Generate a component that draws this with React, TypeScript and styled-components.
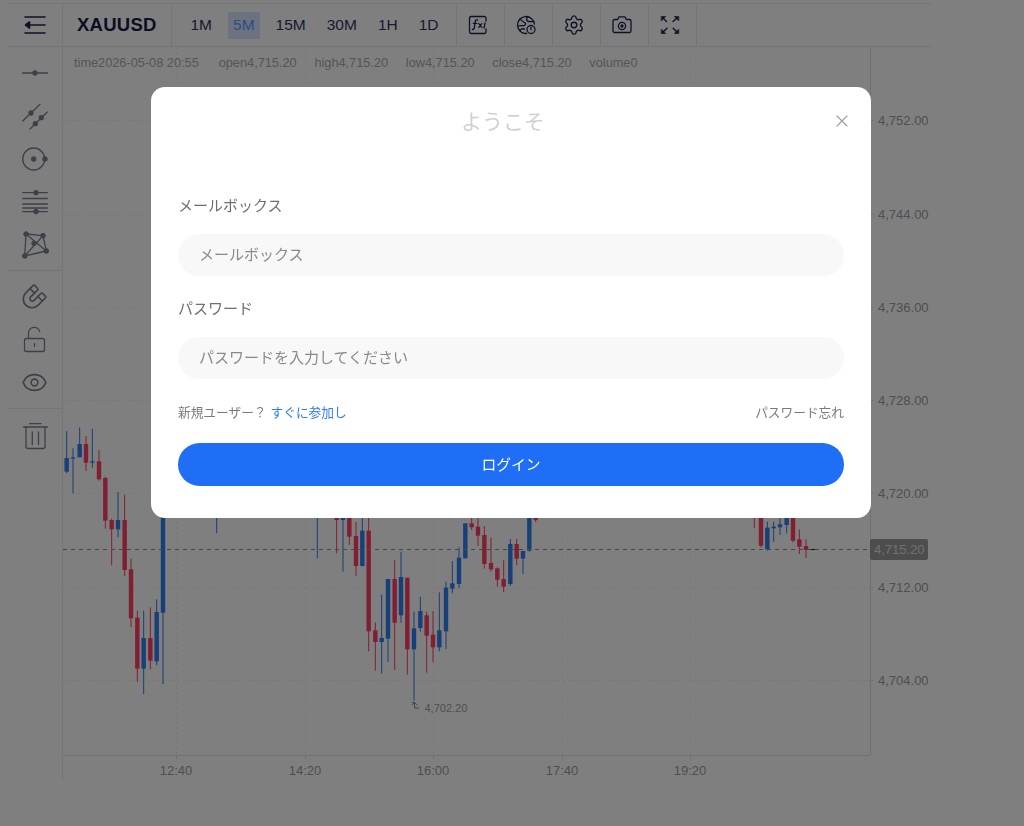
import React from "react";
import styled, { createGlobalStyle } from "styled-components";
import { Magnet, Eye, Settings } from "lucide-react";

const Global = createGlobalStyle`
  html, body { margin: 0; padding: 0; background: #fff; }
  body { font-family: "Liberation Sans", "Noto Sans CJK JP", sans-serif; }
  * { box-sizing: border-box; }
`;

const Page = styled.div`
  width: 1024px;
  height: 826px;
  padding: 3px 0 0 8px;
  overflow: hidden;
`;
const Frame = styled.div`
  width: 924px;
  display: flex;
  flex-direction: column;
`;
const Toolbar = styled.div`
  height: 44px;
  display: flex;
  border-top: 1px solid #ebecee;
  border-bottom: 1px solid #e9eaec;
  color: #1c2450;
`;
const ToolCell = styled.div<{ $w: number; $shift?: number }>`
  width: ${(p) => p.$w}px;
  flex: none;
  display: flex;
  align-items: center;
  justify-content: center;
  padding-right: ${(p) => p.$shift ?? 0}px;
  border-right: 1px solid #e9eaec;
`;
const Symbol = styled.div`
  width: 109px;
  flex: none;
  display: flex;
  align-items: center;
  padding-left: 14px;
  border-right: 1px solid #e9eaec;
  font-size: 18.5px;
  font-weight: 700;
  color: #161d45;
  letter-spacing: 0.25px;
`;
const Periods = styled.div`
  width: 285px;
  flex: none;
  display: flex;
  align-items: center;
  gap: 10px;
  padding-left: 13px;
  border-right: 1px solid #e9eaec;
`;
const Period = styled.div<{ $active?: boolean }>`
  height: 27px;
  padding: 0 5.5px;
  display: flex;
  align-items: center;
  font-size: 15.5px;
  color: ${(p) => (p.$active ? "#5a9cff" : "#30375a")};
  background: ${(p) => (p.$active ? "#d8e5ff" : "transparent")};
`;
const Body = styled.div`
  display: flex;
  height: 733px;
`;
const Sidebar = styled.div`
  width: 55px;
  flex: none;
  border-right: 1px solid #e9eaec;
  color: #7c8092;
  display: flex;
  flex-direction: column;
`;
const ToolGroup = styled.div<{ $top: number; $bottom: number; $divider?: boolean }>`
  padding: ${(p) => p.$top}px 0 ${(p) => p.$bottom}px;
  border-bottom: ${(p) => (p.$divider ? "1px solid #e9eaec" : "none")};
  display: flex;
  flex-direction: column;
`;
const SideItem = styled.div`
  height: 43px;
  display: flex;
  align-items: center;
  justify-content: center;
  padding-right: 1px;
`;
const ChartArea = styled.div`
  position: relative;
  flex: 1;
`;
const ChartSvg = styled.svg`
  display: block;
  width: 869px;
  height: 733px;
`;
const Legend = styled.div`
  position: absolute;
  left: 11px;
  top: 7px;
  display: flex;
  gap: 17.7px;
  font-size: 12.75px;
  line-height: 18px;
  color: #a8abb3;
  white-space: nowrap;
`;
const LegendTime = styled.span`
  min-width: 127px;
`;
const AxisText = styled.text`
  font-family: "Liberation Sans", sans-serif;
  font-size: 13px;
  fill: #9c9da6;
`;
const TagText = styled.text`
  font-family: "Liberation Sans", sans-serif;
  font-size: 13px;
  fill: #fff;
  opacity: 0.7;
`;
const LowText = styled.text`
  font-family: "Liberation Sans", sans-serif;
  font-size: 11px;
  fill: #9c9da6;
`;

const Overlay = styled.div`
  position: fixed;
  inset: 0;
  background: rgba(0, 0, 0, 0.5);
  display: flex;
  justify-content: center;
  align-items: flex-start;
  padding: 87px 2px 0 0;
`;
const Modal = styled.div`
  width: 720px;
  height: 431px;
  background: #fff;
  border-radius: 14px;
  padding: 0 27px;
`;
const ModalHeader = styled.div`
  display: flex;
  align-items: center;
  height: 68px;
  margin-right: -5px;
`;
const Title = styled.div`
  flex: 1;
  text-align: center;
  font-size: 21px;
  line-height: 66px;
  padding-top: 2px;
  color: #d0d0d0;
`;
const CloseBtn = styled.div`
  width: 14px;
  margin-left: 7px;
  height: 14px;
  color: #9a9a9a;
  display: flex;
`;
const FieldLabel = styled.div<{ $gap: number }>`
  margin-top: ${(p) => p.$gap}px;
  font-size: 15px;
  line-height: 20px;
  color: #6f6f6f;
`;
const Input = styled.input`
  display: block;
  width: 100%;
  height: 42px;
  margin-top: 18px;
  border: none;
  outline: none;
  border-radius: 21px;
  background: #f8f8f8;
  padding: 0 21px 2px;
  font-family: inherit;
  font-size: 15px;
  &::placeholder { color: #8a8a8a; opacity: 1; }
`;
const LinksRow = styled.div`
  margin-top: 23px;
  height: 18px;
  display: flex;
  align-items: center;
  justify-content: space-between;
  font-size: 12.7px;
  color: #7a7a7a;
`;
const JoinLink = styled.span`
  color: #2f7af2;
  margin-left: 4px;
`;
const LoginBtn = styled.button`
  display: block;
  width: 100%;
  height: 43px;
  margin-top: 23px;
  border: none;
  border-radius: 22px;
  background: #1e6ef6;
  color: #fff;
  font-family: inherit;
  font-size: 14.8px;
  padding: 0 0 2px;
`;

const Stroke = styled.svg`
  display: block;
  fill: none;
  stroke: currentColor;
  stroke-width: 1.7;
  stroke-linecap: round;
  stroke-linejoin: round;
`;
const RotatedMagnet = styled(Magnet)`
  transform: rotate(180deg);
`;

type C = [number, number, number, number, number, "r" | "b"];
const groupA: C[] = [
  [80, 114, 155, 33, 160, "b"], [99, 112, 116, 85, 220, "b"], [119, 72, 112, 22, 112, "b"],
  [138, 72, 128, 48, 153, "r"], [157, 124, 128, 26, 143, "b"], [177, 124, 178, 90, 182, "r"],
  [196, 174, 302, 170, 326, "r"], [215, 300, 328, 296, 436, "r"], [234, 300, 328, 216, 352, "b"],
  [254, 300, 450, 225, 468, "r"], [273, 448, 595, 416, 622, "r"], [292, 593, 746, 572, 786, "r"],
  [311, 654, 746, 572, 822, "b"], [331, 654, 722, 562, 748, "r"], [350, 576, 724, 538, 736, "b"],
  [369, 250, 578, 200, 792, "b"],
];
const groupB: C[] = [
  [-250, -40, -30, -40, 70, "b"], [52, -30, -20, -30, 145, "b"], [110, 10, 30, 0, 130, "r"],
  [129, 10, 30, 0, 185, "b"], [148, 0, 80, 0, 105, "r"], [168, 78, 168, 36, 198, "r"],
  [187, 62, 168, 20, 170, "b"], [206, 62, 364, 20, 424, "r"], [226, 361, 396, 337, 482, "r"],
  [245, 384, 396, 254, 491, "b"], [264, 207, 386, 207, 456, "b"], [284, 207, 338, 150, 480, "r"],
  [303, 201, 316, 125, 338, "b"], [322, 203, 418, 203, 494, "r"], [342, 355, 418, 305, 572, "b"],
  [361, 303, 354, 260, 365, "b"], [380, 316, 377, 305, 488, "r"], [399, 374, 412, 303, 456, "r"],
  [418, 361, 412, 247, 424, "b"], [438, 233, 364, 215, 417, "b"], [457, 220, 236, 153, 250, "b"],
  [477, 143, 222, 112, 235, "b"], [496, 40, 145, 40, 145, "b"], [515, 40, 52, 20, 60, "r"],
  [534, 50, 77, 20, 108, "r"], [553, 75, 162, 48, 176, "r"], [573, 159, 178, 83, 185, "r"],
  [592, 175, 209, 172, 230, "r"], [611, 207, 230, 150, 246, "r"], [631, 102, 222, 87, 228, "b"],
  [650, 102, 146, 87, 166, "r"], [669, 123, 146, 123, 192, "b"], [688, 0, 122, 0, 125, "b"],
  [707, 0, 30, 0, 36, "r"],
];
const groupC: C[] = [
  [43, 20, 30, 20, 85, "r"], [63, 20, 137, 20, 142, "r"], [82, 83, 148, 65, 152, "b"],
  [101, 80, 85, 65, 125, "b"], [120, 73, 82, 50, 105, "b"], [140, 50, 75, 40, 100, "b"],
  [159, 50, 122, 40, 127, "r"], [178, 118, 140, 88, 162, "r"], [198, 138, 150, 118, 174, "r"],
];

const BLUE = "#2f7ef0";
const RED = "#ff3f62";

const Candles: React.FC<{ data: C[]; ox: number; oy: number }> = ({ data, ox, oy }) => (
  <g>
    {data.map(([zx, top, bot, hi, lo, col], i) => {
      const x = ox + zx / 3;
      const fill = col === "r" ? RED : BLUE;
      return (
        <g key={i} fill={fill}>
          <rect x={x - 0.5} y={oy + hi / 3} width={1} height={(lo - hi) / 3} />
          <rect x={x - 2.2} y={oy + top / 3} width={4.4} height={Math.max(1, (bot - top) / 3)} />
        </g>
      );
    })}
  </g>
);

const prices: [number, string][] = [
  [120, "4,752.00"], [214, "4,744.00"], [307, "4,736.00"], [400, "4,728.00"],
  [493, "4,720.00"], [587, "4,712.00"], [680, "4,704.00"],
];
const times: [number, string][] = [
  [176, "12:40"], [305, "14:20"], [433, "16:00"], [562, "17:40"], [690, "19:20"],
];

const Chart = () => (
  <ChartSvg viewBox="63 47 869 733">
    {prices.map(([y]) => (
      <line key={y} x1={63} x2={870} y1={y + 0.5} y2={y + 0.5} stroke="#eeeff1" strokeDasharray="2 3" />
    ))}
    {times.map(([x]) => (
      <line key={x} x1={x + 0.5} x2={x + 0.5} y1={47} y2={755} stroke="#eeeff1" strokeDasharray="2 3" />
    ))}
    <line x1={870.5} x2={870.5} y1={47} y2={755} stroke="#dfe0e3" />
    <line x1={63} x2={870} y1={755.5} y2={755.5} stroke="#dfe0e3" />
    <Candles data={groupA} ox={40} oy={420} />
    <Candles data={groupB} ox={300} oy={510} />
    <Candles data={groupC} ox={740} oy={500} />
    <rect x={809} y={549} width={6} height={1} fill="#222" />
    <line x1={63} x2={870} y1={549.5} y2={549.5} stroke="#8f8f8f" strokeDasharray="4 4" />
    <path d="M412 702.5h2.6v5.5h4.6M412 705l2.6-2.6l2.6 2.6" fill="none" stroke="#8e8e96" strokeWidth={1} />
    <LowText x={424.5} y={712}>4,702.20</LowText>
    {prices.map(([y, t]) => (
      <g key={t}>
        <line x1={871} x2={874} y1={y + 0.5} y2={y + 0.5} stroke="#dfe0e3" />
        <AxisText x={878} y={y + 5}>{t}</AxisText>
      </g>
    ))}
    <rect x={870} y={539} width={58} height={21} rx={2} fill="#9a9a9a" />
    <TagText x={874} y={554}>4,715.20</TagText>
    {times.map(([x, t]) => (
      <g key={t}>
        <line x1={x + 0.5} x2={x + 0.5} y1={756} y2={759} stroke="#dfe0e3" />
        <AxisText x={x} y={775} textAnchor="middle">{t}</AxisText>
      </g>
    ))}
  </ChartSvg>
);

const MenuIcon = () => (
  <Stroke width="24" height="22" viewBox="0 0 24 22" style={{ strokeWidth: 1.6 }}>
    <path d="M2 3h20M7 11h15M2 19h20" />
    <path d="M6.5 8L2.5 11l4 3z" fill="currentColor" />
  </Stroke>
);
const FxIcon = () => (
  <Stroke width="20" height="20" viewBox="0 0 20 20" style={{ strokeWidth: 1.3 }}>
    <path d="M18 6V3.2A1.7 1.7 0 0 0 16.3 1.5H3.2A1.7 1.7 0 0 0 1.5 3.2v13.6a1.7 1.7 0 0 0 1.7 1.7h13.1a1.7 1.7 0 0 0 1.7-1.7V14" />
    <path d="M9.6 5.2c-1.4-.6-2.2 0-2.4 1.4l-.9 6.3c-.2 1.3-1 1.9-2 1.4M5.3 8.3h3.6M10.8 8.6l3 3.8M13.8 8.6l-3 3.8M17 8l-1 5" />
  </Stroke>
);
const GlobeClockIcon = () => (
  <Stroke width="20" height="20" viewBox="0 0 20 20" style={{ strokeWidth: 1.3 }}>
    <path d="M10.5 18.5A8.5 8.5 0 1 1 18.5 9" />
    <path d="M4 3.8c1.5 2.6 3.8 3 5 4 1.2 1 .2 2.6-1.2 2.8-1.8.2-3.9-.3-6.3.4M12 1.8c-1.7 1.4-1.8 3.2-.4 4.3 1.4 1 3.6.4 6 .6M4 16c.7-2.2 2.6-2.8 4.5-1.8" />
    <circle cx="15" cy="14.5" r="4" />
    <path d="M15 12.5v2.2" />
  </Stroke>
);
const CameraIcon = () => (
  <Stroke width="20" height="20" viewBox="0 0 20 20" style={{ strokeWidth: 1.3 }}>
    <path d="M2.5 4.5h3.2l1.2-2.6h6.2l1.2 2.6h3.2a1.5 1.5 0 0 1 1.5 1.5v10a1.5 1.5 0 0 1-1.5 1.5H2.5A1.5 1.5 0 0 1 1 16V6a1.5 1.5 0 0 1 1.5-1.5z" />
    <circle cx="10" cy="11" r="3.6" />
    <circle cx="10" cy="11" r="1" fill="currentColor" />
  </Stroke>
);
const FullIcon = () => (
  <Stroke width="20" height="20" viewBox="0 0 20 20" style={{ strokeWidth: 1.4 }}>
    <path d="M2.5 2.5l4 4M7 13.2l-4.5 4.3M13 6.5l4.5-4M13.2 13.2l4.3 4.3" />
    <path d="M1.5 1.5h4.2L1.5 5.7zM18.5 1.5h-4.2l4.2 4.2zM1.5 18.5h4.2L1.5 14.3zM18.5 18.5h-4.2l4.2-4.2z" fill="currentColor" strokeWidth="0.6" />
  </Stroke>
);

/* sidebar icons use a 30x30 box centred on the 35px column axis */
const SideSvg: React.FC<{ children: React.ReactNode }> = ({ children }) => (
  <Stroke width="30" height="30" viewBox="0 0 30 30" style={{ strokeWidth: 1.3 }}>
    {children}
  </Stroke>
);
const LineIcon = () => (
  <SideSvg>
    <path d="M2.5 15h25" />
    <circle cx="15" cy="15" r="2" fill="currentColor" />
  </SideSvg>
);
const ParallelIcon = () => (
  <SideSvg>
    <path d="M2.7 20L20 3.3M10 28L27.3 11" />
    <circle cx="11" cy="12" r="2" fill="currentColor" />
    <circle cx="15.3" cy="22.7" r="2" fill="currentColor" />
    <circle cx="21.3" cy="16.7" r="2" fill="currentColor" />
  </SideSvg>
);
const CircleIcon = () => (
  <SideSvg>
    <circle cx="13.7" cy="15" r="11" />
    <circle cx="13.7" cy="15" r="2" fill="currentColor" />
    <circle cx="25" cy="15" r="2" fill="currentColor" />
  </SideSvg>
);
const FibIcon = () => (
  <SideSvg>
    <path d="M2.7 5.7h24.6M2.7 11.5h24.6M2.7 17h24.6M2.7 21h24.6M2.7 24.7h24.6" />
    <circle cx="16" cy="5.7" r="2" fill="currentColor" />
    <circle cx="16" cy="24.5" r="2" fill="currentColor" />
  </SideSvg>
);
const MeshIcon = () => {
  const n: [number, number][] = [[6, 4], [23, 5.7], [26.3, 21], [4.7, 26], [14, 13.3]];
  return (
    <SideSvg>
      <path d="M6 4L23 5.7L26.3 21L4.7 26ZM6 4L26.3 21M23 5.7L4.7 26" />
      {n.map(([x, y]) => (
        <circle key={x} cx={x} cy={y} r="2" fill="currentColor" />
      ))}
    </SideSvg>
  );
};
const LockIcon = () => (
  <SideSvg>
    <rect x="4.5" y="14.5" width="20" height="13" rx="2" />
    <path d="M8.5 14.5V9a5.7 5.7 0 0 1 11.2-1.4M14.5 19.5v3" />
  </SideSvg>
);
const TrashIcon = () => (
  <SideSvg>
    <path d="M3.5 6h24M9.5 2.7h11.5M6 6.5v19a2 2 0 0 0 2 2h15a2 2 0 0 0 2-2v-19M12.3 11v12.5M18.5 11v12.5" />
  </SideSvg>
);
const XIcon = () => (
  <Stroke width="14" height="14" viewBox="0 0 14 14" style={{ strokeWidth: 1.1 }}>
    <path d="M2 2l10 10M12 2L2 12" />
  </Stroke>
);

export default function App() {
  return (
    <Page>
      <Global />
      <Frame>
        <Toolbar>
          <ToolCell $w={55}><MenuIcon /></ToolCell>
          <Symbol>XAUUSD</Symbol>
          <Periods>
            <Period>1M</Period>
            <Period $active>5M</Period>
            <Period>15M</Period>
            <Period>30M</Period>
            <Period>1H</Period>
            <Period>1D</Period>
          </Periods>
          <ToolCell $w={48} $shift={6}><FxIcon /></ToolCell>
          <ToolCell $w={48} $shift={6}><GlobeClockIcon /></ToolCell>
          <ToolCell $w={48} $shift={6}><Settings size={22} strokeWidth={1.5} /></ToolCell>
          <ToolCell $w={48} $shift={6}><CameraIcon /></ToolCell>
          <ToolCell $w={48} $shift={6}><FullIcon /></ToolCell>
        </Toolbar>
        <Body>
          <Sidebar>
            <ToolGroup $top={4.5} $bottom={3} $divider>
              <SideItem><LineIcon /></SideItem>
              <SideItem><ParallelIcon /></SideItem>
              <SideItem><CircleIcon /></SideItem>
              <SideItem><FibIcon /></SideItem>
              <SideItem><MeshIcon /></SideItem>
            </ToolGroup>
            <ToolGroup $top={4} $bottom={4} $divider>
              <SideItem><RotatedMagnet size={27} strokeWidth={1.5} /></SideItem>
              <SideItem><LockIcon /></SideItem>
              <SideItem><Eye size={27} strokeWidth={1.4} /></SideItem>
            </ToolGroup>
            <ToolGroup $top={5.5} $bottom={4}>
              <SideItem><TrashIcon /></SideItem>
            </ToolGroup>
          </Sidebar>
          <ChartArea>
            <Chart />
            <Legend>
              <LegendTime>time2026-05-08 20:55</LegendTime>
              <span>open4,715.20</span>
              <span>high4,715.20</span>
              <span>low4,715.20</span>
              <span>close4,715.20</span>
              <span>volume0</span>
            </Legend>
          </ChartArea>
        </Body>
      </Frame>
      <Overlay>
        <Modal>
          <ModalHeader>
            <Title>ようこそ</Title>
            <CloseBtn><XIcon /></CloseBtn>
          </ModalHeader>
          <FieldLabel $gap={41}>メールボックス</FieldLabel>
          <Input placeholder="メールボックス" />
          <FieldLabel $gap={23}>パスワード</FieldLabel>
          <Input placeholder="パスワードを入力してください" />
          <LinksRow>
            <span>新規ユーザー？<JoinLink>すぐに参加し</JoinLink></span>
            <span>パスワード忘れ</span>
          </LinksRow>
          <LoginBtn>ログイン</LoginBtn>
        </Modal>
      </Overlay>
    </Page>
  );
}
